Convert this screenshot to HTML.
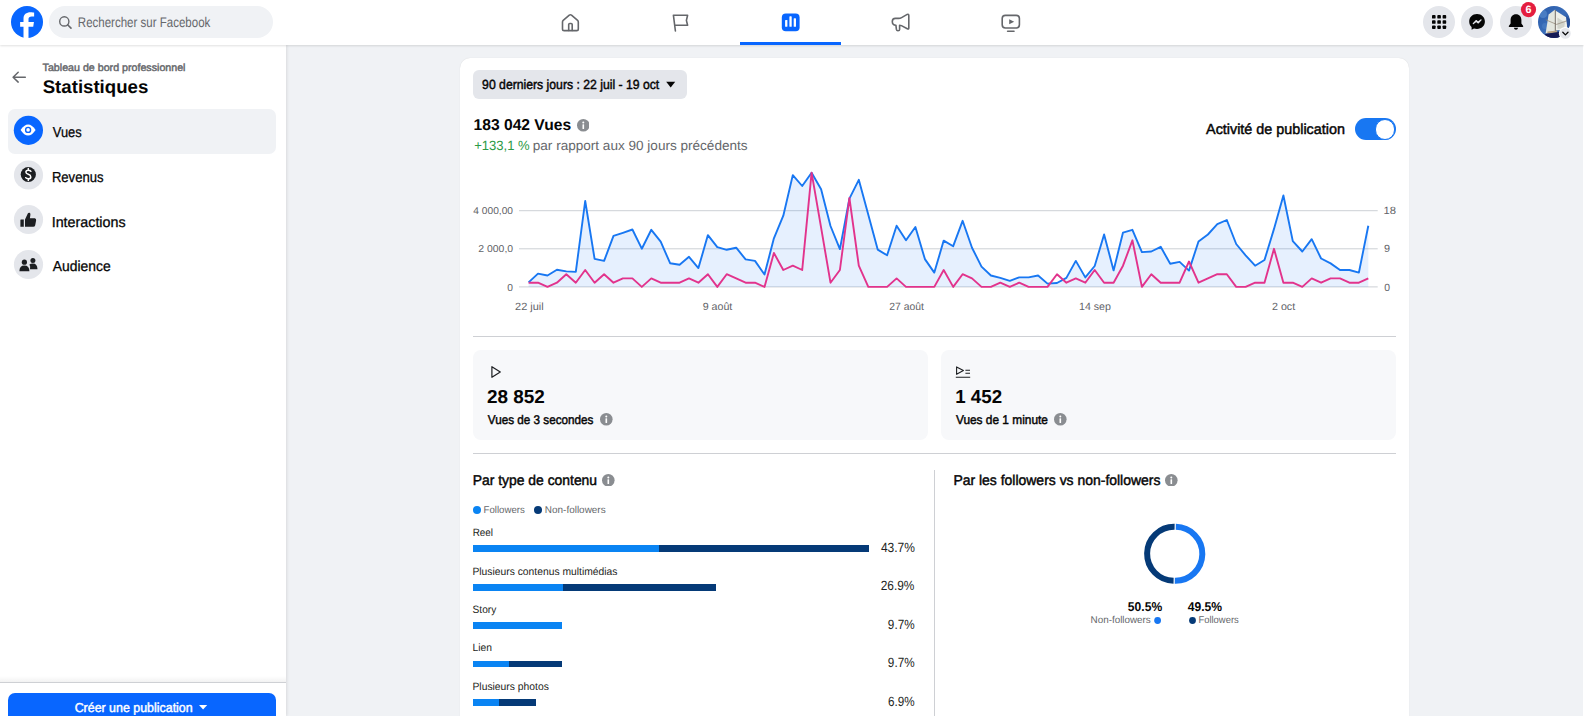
<!DOCTYPE html><html><head><meta charset="utf-8"><style>
body{margin:0;width:1584px;height:716px;background:#F0F2F5;position:relative;overflow:hidden;font-family:"Liberation Sans",sans-serif}
.abs{position:absolute}
.t{position:absolute;white-space:nowrap;transform-origin:0 0;z-index:5;text-rendering:geometricPrecision}
svg.abs{z-index:4}
</style></head><body>
<div class="abs" style="left:0;top:0;width:1584px;height:45px;background:#fff;box-shadow:0 1px 2px rgba(0,0,0,0.12);z-index:2"></div>
<div class="abs" style="left:0;top:45px;width:286px;height:671px;background:#fff;box-shadow:1px 0 3px rgba(0,0,0,0.10);z-index:1"></div>
<div class="abs" style="left:1583px;top:45px;width:1px;height:671px;background:#fff"></div>
<div class="abs" style="left:460px;top:58px;width:949px;height:700px;background:#fff;border-radius:10px;box-shadow:0 0 1px rgba(0,0,0,0.15)"></div>
<!-- FB logo -->
<svg class="abs" style="left:11px;top:6px" width="32" height="32" viewBox="0 0 1024 1024"><circle cx="512" cy="512" r="512" fill="#0866FF"/><path fill="#fff" d="M711.3,660 L734,512 H560 V415.96 C560,375.47,592,336,662,336 H740 V210 s-58.59-10-114.61-10 C490,200,400,270.88,400,399.2 V512 H292 V660 H400 V1024 H560 V660 Z"/></svg>
<!-- search -->
<div class="abs" style="left:49px;top:6px;width:224px;height:32px;border-radius:16px;background:#F0F2F5;z-index:3"></div>
<svg class="abs" style="left:0;top:0;z-index:4" width="300" height="45"><circle cx="64.3" cy="21.4" r="4.6" fill="none" stroke="#65676B" stroke-width="1.4"/><path d="M67.6 24.7 L71 28.1" stroke="#65676B" stroke-width="1.6" stroke-linecap="round"/></svg>
<!-- nav icons -->
<svg class="abs" style="left:540px;top:0;z-index:4" width="500" height="45" viewBox="540 0 500 45">
 <g fill="none" stroke="#65676B" stroke-width="1.6" stroke-linejoin="round" stroke-linecap="round">
  <path d="M563.2 20.3 L569.3 15.2 Q570.4 14.4 571.5 15.2 L577.6 20.3 Q578.3 20.9 578.3 21.9 V28.9 Q578.3 30.6 576.6 30.6 H564.2 Q562.5 30.6 562.5 28.9 V21.9 Q562.5 20.9 563.2 20.3 Z"/>
  <path d="M568.7 30.4 V24.6 Q568.7 23.5 569.8 23.5 H571.1 Q572.2 23.5 572.2 24.6 V30.4"/>
  <path d="M675.4 31 L673.4 15.2 H687.6 L686.4 20.4 L687.6 25.2 H674.8"/>
  <path d="M892.3 21.4 Q892.3 18.4 895.4 18.4 H898.6 Q900.2 18.4 901.6 17.6 L907.2 14.4 Q908.8 13.8 908.8 15.4 V27.9 Q908.8 29.6 907.3 28.8 L901.4 25.6 Q900.6 25.2 899.6 25.2 V29.4 Q899.6 30.7 898 30.7 Q896.6 30.7 896.4 29.4 L895.9 25.2 Q892.3 24.9 892.3 21.4 Z"/>
  <rect x="1002.2" y="15.4" width="17.2" height="12.6" rx="3.2"/>
  <path d="M1007.6 31.2 H1014"/>
 </g>
 <path d="M1009.2 19.2 L1014.2 21.7 L1009.2 24.2 Z" fill="#65676B"/>
 <rect x="781.8" y="13.6" width="17.8" height="17.7" rx="4" fill="#0866FF"/>
 <rect x="785.1" y="20" width="2.3" height="6.8" rx="0.6" fill="#fff"/>
 <rect x="789.4" y="16.3" width="2.3" height="10.5" rx="0.6" fill="#fff"/>
 <rect x="793.7" y="18.2" width="2.3" height="8.6" rx="0.6" fill="#fff"/>
 <rect x="740" y="42" width="101" height="3" fill="#0866FF"/>
</svg>
<!-- right buttons -->
<svg class="abs" style="left:1400px;top:0;z-index:4" width="184" height="45" viewBox="1400 0 184 45">
 <circle cx="1439" cy="22" r="16" fill="#E4E6EB"/>
 <g fill="#050505">
  <rect x="1432" y="15" width="3.6" height="3.6" rx="0.9"/><rect x="1437.3" y="15" width="3.6" height="3.6" rx="0.9"/><rect x="1442.6" y="15" width="3.6" height="3.6" rx="0.9"/>
  <rect x="1432" y="20.2" width="3.6" height="3.6" rx="0.9"/><rect x="1437.3" y="20.2" width="3.6" height="3.6" rx="0.9"/><rect x="1442.6" y="20.2" width="3.6" height="3.6" rx="0.9"/>
  <rect x="1432" y="25.4" width="3.6" height="3.6" rx="0.9"/><rect x="1437.3" y="25.4" width="3.6" height="3.6" rx="0.9"/><rect x="1442.6" y="25.4" width="3.6" height="3.6" rx="0.9"/>
 </g>
 <circle cx="1477" cy="22" r="16" fill="#E4E6EB"/>
 <path d="M1477 14 C1472.4 14 1469.2 17.3 1469.2 21.6 C1469.2 23.9 1470.1 25.8 1471.6 27.1 V29.7 L1474 28.4 C1474.9 28.7 1475.9 28.9 1477 28.9 C1481.6 28.9 1484.9 25.7 1484.9 21.5 C1484.9 17.3 1481.6 14 1477 14 Z" fill="#050505"/>
 <path d="M1473.3 23.6 L1476.1 20.6 L1478 22.2 L1481 19.9 L1478.3 22.9 L1476.3 21.3 Z" fill="#E4E6EB" stroke="#E4E6EB" stroke-width="1.3" stroke-linejoin="round"/>
 <circle cx="1516" cy="22" r="16" fill="#E4E6EB"/>
 <path d="M1516 14.2 C1512.6 14.2 1510.6 16.8 1510.6 20 V23.4 L1508.8 26.1 Q1508.4 26.9 1509.3 26.9 H1522.7 Q1523.6 26.9 1523.2 26.1 L1521.4 23.4 V20 C1521.4 16.8 1519.4 14.2 1516 14.2 Z" fill="#050505"/>
 <path d="M1513.8 27.8 Q1514.3 29.7 1516 29.7 Q1517.7 29.7 1518.2 27.8 Z" fill="#050505"/>
 <circle cx="1528.5" cy="9.6" r="7.6" fill="#E41E3F"/>
 <text x="1528.5" y="13.3" font-family="Liberation Sans" font-weight="bold" font-size="10.8" fill="#fff" text-anchor="middle" style="text-rendering:geometricPrecision">6</text>
 <defs>
  <clipPath id="av"><circle cx="1554" cy="22" r="16"/></clipPath>
  <linearGradient id="sky" x1="0" y1="0" x2="1" y2="1"><stop offset="0" stop-color="#2A5BA8"/><stop offset="0.5" stop-color="#3A6DB9"/><stop offset="1" stop-color="#1D4389"/></linearGradient>
 </defs>
 <g clip-path="url(#av)">
  <rect x="1538" y="6" width="32" height="32" fill="url(#sky)"/>
  <circle cx="1543" cy="14" r="4" fill="#5B8FD0" opacity="0.6"/>
  <circle cx="1545" cy="26" r="3" fill="#4F83C8" opacity="0.5"/>
  <path d="M1548.6 14.5 L1555.2 9.6 L1555.4 31 L1545.6 33.4 Z" fill="#E3E6DF"/>
  <path d="M1555.4 10.6 L1566.5 17.5 L1567.6 29.4 L1555.4 30.6 Z" fill="#EEEFE9"/>
  <path d="M1557.4 17.4 L1565 22.4 L1564 28.6 L1557.4 28.8 Z" fill="#D2D4CC"/>
  <path d="M1545.8 19.8 L1556.6 24.4 L1567 20.8" fill="none" stroke="#8E8272" stroke-width="0.7"/>
  <path d="M1555.3 10 V31.5" stroke="#776B5C" stroke-width="0.9"/>
  <path d="M1566 16 L1570 19 L1570 30 L1567.5 29.5 Z" fill="#27509A"/>
  <path d="M1547.5 31.6 L1557 30.6 L1557.4 32.6 L1547.2 33.6 Z" fill="#B8A080"/>
  <path d="M1545 34 L1562 31.6 L1560.5 38.5 L1546 38.5 Z" fill="#151A55"/>
 </g>
 <circle cx="1565.3" cy="33.4" r="6.4" fill="#fff"/>
 <circle cx="1565.3" cy="33.4" r="5.4" fill="#E4E6EB"/>
 <path d="M1562.8 32.3 L1565.4 34.9 L1568 32.3" fill="none" stroke="#050505" stroke-width="1.3" stroke-linecap="round" stroke-linejoin="round"/>
</svg>
<!-- sidebar -->
<svg class="abs" style="left:0;top:45px;z-index:4" width="286" height="260" viewBox="0 45 286 260">
 <path d="M25.3 77.2 H13.2 M18.2 72.3 L13.1 77.2 L18.2 82.1" fill="none" stroke="#65676B" stroke-width="1.5" stroke-linecap="round" stroke-linejoin="round"/>
</svg>
<div class="abs" style="left:8px;top:109px;width:268px;height:45px;border-radius:7px;background:#F0F2F5;z-index:2"></div>
<svg class="abs" style="left:0;top:100px;z-index:4" width="60" height="200" viewBox="0 100 60 200">
 <circle cx="28.4" cy="130.3" r="14.6" fill="#0866FF"/>
 <path d="M20.6 129.9 Q24.2 124.4 28.1 124.4 Q32 124.4 35.6 129.9 Q32 135.4 28.1 135.4 Q24.2 135.4 20.6 129.9 Z" fill="#fff"/>
 <circle cx="28.1" cy="129.9" r="2.5" fill="none" stroke="#0866FF" stroke-width="1.4"/>
 <circle cx="28.5" cy="175" r="14.6" fill="#E4E6EB"/>
 <circle cx="28.3" cy="174.5" r="7.6" fill="#1C1E21"/>
 <path d="M30.9 171.3 Q30.2 170.2 28.3 170.2 Q25.9 170.2 25.9 172 Q25.9 173.5 28.3 174.3 Q30.8 175.1 30.8 176.9 Q30.8 178.8 28.3 178.8 Q26.4 178.8 25.7 177.7 M28.3 168.6 V170.2 M28.3 178.8 V180.4" fill="none" stroke="#fff" stroke-width="1.5" stroke-linecap="round"/>
 <circle cx="28.5" cy="219.5" r="14.6" fill="#E4E6EB"/>
 <path d="M20.8 219.6 H23.8 V226.8 H20.8 Q20.4 226.8 20.4 226.4 V220 Q20.4 219.6 20.8 219.6 Z" fill="#1C1E21"/>
 <path d="M25 219.4 L27.8 213.6 Q28.4 212.4 29.6 212.8 Q30.6 213.2 30.4 214.7 L29.9 218.2 H34.8 Q36.5 218.4 36.1 220.4 L35.2 225.3 Q34.8 226.8 33.2 226.8 H25 Z" fill="#1C1E21"/>
 <circle cx="28.5" cy="264.5" r="14.6" fill="#E4E6EB"/>
 <circle cx="24.4" cy="262.2" r="2.6" fill="#1C1E21"/>
 <circle cx="32.9" cy="260.4" r="2.5" fill="#1C1E21"/>
 <path d="M19.4 271.2 Q19.4 265.6 24.4 265.6 Q29.4 265.6 29.4 271.2 Z" fill="#1C1E21"/>
 <path d="M30 269.3 Q30.6 266 29.4 264.6 Q30.6 263.5 32.9 263.5 Q37.3 263.5 37.5 269.3 Z" fill="#1C1E21"/>
</svg>
<!-- bottom create button -->
<div class="abs" style="left:0;top:676px;width:286px;height:6px;background:linear-gradient(to bottom,rgba(0,0,0,0),rgba(0,0,0,0.05));z-index:3"></div>
<div class="abs" style="left:0;top:682px;width:286px;height:1px;background:#CED0D4;z-index:3"></div>
<div class="abs" style="left:8px;top:693px;width:268px;height:36px;border-radius:7px;background:#0866FF;z-index:3"></div>
<svg class="abs" style="left:195px;top:700px;z-index:4" width="16" height="12" viewBox="195 700 16 12"><path d="M199 705 H207.2 L203.1 709.4 Z" fill="#fff"/></svg>
<!-- date button -->
<div class="abs" style="left:473px;top:70px;width:214px;height:29px;border-radius:6px;background:#E4E6EB;z-index:3"></div>
<svg class="abs" style="left:660px;top:75px;z-index:4" width="20" height="20" viewBox="660 75 20 20"><path d="M666.2 81.8 H675.2 L670.7 87.4 Z" fill="#050505"/></svg>
<!-- toggle -->
<div class="abs" style="left:1355px;top:118px;width:41px;height:22px;border-radius:11px;background:#1877F2;z-index:3"></div>
<div class="abs" style="left:1374.6px;top:119px;width:18.6px;height:18.6px;border-radius:50%;background:#fff;border:1.2px solid #1877F2;z-index:3"></div>
<!-- separators -->
<div class="abs" style="left:473px;top:336px;width:923px;height:1px;background:#CED0D4;z-index:3"></div>
<div class="abs" style="left:473px;top:453px;width:923px;height:1px;background:#CED0D4;z-index:3"></div>
<div class="abs" style="left:934px;top:470px;width:1px;height:246px;background:#CED0D4;z-index:3"></div>
<!-- stat cards -->
<div class="abs" style="left:473px;top:350px;width:455px;height:90px;border-radius:8px;background:#F7F8FA;z-index:3"></div>
<div class="abs" style="left:941px;top:350px;width:455px;height:90px;border-radius:8px;background:#F7F8FA;z-index:3"></div>
<svg class="abs" style="left:480px;top:360px;z-index:4" width="500" height="30" viewBox="480 360 500 30">
 <path d="M491.9 366.7 L500.3 372 L491.9 377.3 Z" fill="none" stroke="#1C1E21" stroke-width="1.2" stroke-linejoin="round"/>
 <path d="M956.6 366.9 L963.4 370.6 L956.6 374.3 Z" fill="none" stroke="#1C1E21" stroke-width="1.1" stroke-linejoin="round"/>
 <path d="M965.4 370.2 H970 M965.4 373.2 H970 M955.8 377.3 H970.2" stroke="#1C1E21" stroke-width="1.1"/>
</svg>
<!-- bars -->
<div class="abs" style="left:473px;top:545px;width:186px;height:7px;background:#0A84F3;z-index:3"></div>
<div class="abs" style="left:659px;top:545px;width:210px;height:7px;background:#053A77;z-index:3"></div>
<div class="abs" style="left:473px;top:584px;width:90px;height:6.5px;background:#0A84F3;z-index:3"></div>
<div class="abs" style="left:563px;top:584px;width:153px;height:6.5px;background:#053A77;z-index:3"></div>
<div class="abs" style="left:473px;top:622.3px;width:89px;height:6.5px;background:#0A84F3;z-index:3"></div>
<div class="abs" style="left:473px;top:660.9px;width:36px;height:6.5px;background:#0A84F3;z-index:3"></div>
<div class="abs" style="left:509px;top:660.9px;width:53px;height:6.5px;background:#053A77;z-index:3"></div>
<div class="abs" style="left:473px;top:699px;width:26px;height:6.5px;background:#0A84F3;z-index:3"></div>
<div class="abs" style="left:499px;top:699px;width:37px;height:6.5px;background:#053A77;z-index:3"></div>
<!-- legend dots -->
<svg class="abs" style="left:460px;top:500px;z-index:4" width="100" height="20" viewBox="460 500 100 20">
 <circle cx="477" cy="509.9" r="4" fill="#0A84F3"/><circle cx="538" cy="509.9" r="4" fill="#053A77"/>
</svg>
<!-- donut -->
<svg class="abs" style="left:1080px;top:510px;z-index:4" width="180" height="120" viewBox="1080 510 180 120">
 <path d="M1175.8 526.8 A27 27 0 1 1 1174.8 580.8" fill="none" stroke="#1877F2" stroke-width="6"/>
 <path d="M1173.6 580.8 A27 27 0 0 1 1174.6 526.8" fill="none" stroke="#053A77" stroke-width="6"/>
 <circle cx="1157.6" cy="620.5" r="3.4" fill="#1877F2"/><circle cx="1192.5" cy="620.5" r="3.4" fill="#053A77"/>
</svg>

<svg class="abs" style="left:0;top:0" width="1584" height="716" viewBox="0 0 1584 716">
<rect x="519" y="210.2" width="858.7" height="1" fill="#CCD0D5"/><rect x="519" y="248.3" width="858.7" height="1" fill="#CCD0D5"/><rect x="519" y="286.4" width="858.7" height="1" fill="#CCD0D5"/>
<path d="M528.6,286.9 L528.6,282.4 538.0,273.6 547.5,275.5 556.9,269.7 566.3,271.4 575.8,271.9 585.2,201.0 594.6,258.9 604.1,260.9 613.5,235.9 622.9,232.8 632.4,229.5 641.8,248.7 651.3,229.8 660.7,241.7 670.1,263.2 679.6,264.7 689.0,256.8 698.4,268.1 707.9,235.1 717.3,247.2 726.7,249.8 736.2,247.7 745.6,259.4 755.0,260.9 764.5,274.5 773.9,238.3 783.3,215.7 792.8,175.1 802.2,186.0 811.6,172.8 821.1,189.2 830.5,226.0 839.9,249.1 849.4,198.7 858.8,179.8 868.3,214.7 877.7,249.6 887.1,255.3 896.6,225.7 906.0,240.2 915.4,227.0 924.9,259.1 934.3,272.6 943.7,240.6 953.2,246.2 962.6,220.8 972.0,247.7 981.5,266.6 990.9,275.5 1000.3,277.9 1009.8,280.8 1019.2,277.4 1028.6,277.4 1038.1,275.5 1047.5,283.6 1057.0,283.0 1066.4,277.9 1075.8,260.9 1085.3,277.4 1094.7,266.0 1104.1,234.5 1113.6,270.4 1123.0,232.6 1132.4,229.8 1141.9,252.1 1151.3,251.5 1160.7,246.8 1170.2,263.8 1179.6,261.9 1189.0,270.6 1198.5,241.5 1207.9,234.5 1217.3,224.2 1226.8,220.0 1236.2,244.0 1245.6,255.3 1255.1,265.7 1264.5,260.0 1274.0,228.9 1283.4,195.5 1292.8,241.1 1302.3,251.5 1311.7,239.2 1321.1,258.5 1330.6,263.4 1340.0,270.0 1349.4,270.0 1358.9,272.6 1368.3,225.7 L1368.3,286.9 Z" fill="#1877F2" fill-opacity="0.11"/>
<polyline points="528.6,282.4 538.0,273.6 547.5,275.5 556.9,269.7 566.3,271.4 575.8,271.9 585.2,201.0 594.6,258.9 604.1,260.9 613.5,235.9 622.9,232.8 632.4,229.5 641.8,248.7 651.3,229.8 660.7,241.7 670.1,263.2 679.6,264.7 689.0,256.8 698.4,268.1 707.9,235.1 717.3,247.2 726.7,249.8 736.2,247.7 745.6,259.4 755.0,260.9 764.5,274.5 773.9,238.3 783.3,215.7 792.8,175.1 802.2,186.0 811.6,172.8 821.1,189.2 830.5,226.0 839.9,249.1 849.4,198.7 858.8,179.8 868.3,214.7 877.7,249.6 887.1,255.3 896.6,225.7 906.0,240.2 915.4,227.0 924.9,259.1 934.3,272.6 943.7,240.6 953.2,246.2 962.6,220.8 972.0,247.7 981.5,266.6 990.9,275.5 1000.3,277.9 1009.8,280.8 1019.2,277.4 1028.6,277.4 1038.1,275.5 1047.5,283.6 1057.0,283.0 1066.4,277.9 1075.8,260.9 1085.3,277.4 1094.7,266.0 1104.1,234.5 1113.6,270.4 1123.0,232.6 1132.4,229.8 1141.9,252.1 1151.3,251.5 1160.7,246.8 1170.2,263.8 1179.6,261.9 1189.0,270.6 1198.5,241.5 1207.9,234.5 1217.3,224.2 1226.8,220.0 1236.2,244.0 1245.6,255.3 1255.1,265.7 1264.5,260.0 1274.0,228.9 1283.4,195.5 1292.8,241.1 1302.3,251.5 1311.7,239.2 1321.1,258.5 1330.6,263.4 1340.0,270.0 1349.4,270.0 1358.9,272.6 1368.3,225.7" fill="none" stroke="#1877F2" stroke-width="1.9" stroke-linejoin="round"/>
<polyline points="528.6,282.7 538.0,282.7 547.5,286.9 556.9,282.7 566.3,274.2 575.8,282.7 585.2,270.0 594.6,282.7 604.1,274.2 613.5,282.7 622.9,278.4 632.4,278.4 641.8,286.9 651.3,278.4 660.7,282.7 670.1,282.7 679.6,282.7 689.0,278.4 698.4,282.7 707.9,274.2 717.3,286.9 726.7,274.2 736.2,278.4 745.6,282.7 755.0,282.7 764.5,286.9 773.9,253.0 783.3,270.0 792.8,265.7 802.2,270.0 811.6,172.6 821.1,227.6 830.5,282.7 839.9,270.0 849.4,198.0 858.8,265.7 868.3,286.9 877.7,286.9 887.1,286.9 896.6,278.4 906.0,286.9 915.4,286.9 924.9,286.9 934.3,286.9 943.7,270.0 953.2,286.9 962.6,274.2 972.0,278.4 981.5,286.9 990.9,286.9 1000.3,282.7 1009.8,286.9 1019.2,282.7 1028.6,286.9 1038.1,286.9 1047.5,286.9 1057.0,274.2 1066.4,282.7 1075.8,278.4 1085.3,282.7 1094.7,270.0 1104.1,282.7 1113.6,282.7 1123.0,265.7 1132.4,240.3 1141.9,286.9 1151.3,274.2 1160.7,282.7 1170.2,282.7 1179.6,282.7 1189.0,261.5 1198.5,282.7 1207.9,278.4 1217.3,274.2 1226.8,274.2 1236.2,286.9 1245.6,286.9 1255.1,282.7 1264.5,282.7 1274.0,248.8 1283.4,282.7 1292.8,282.7 1302.3,286.9 1311.7,278.4 1321.1,282.7 1330.6,278.4 1340.0,278.4 1349.4,282.7 1358.9,282.7 1368.3,278.4" fill="none" stroke="#E2338C" stroke-width="1.9" stroke-linejoin="round"/>
</svg>
<svg class="abs" style="left:576.70px;top:119.10px" width="12.6" height="12.6" viewBox="-10 -10 20 20"><circle r="10" fill="#8A8D91"/><circle cx="0" cy="-4.6" r="1.6" fill="#fff"/><rect x="-1.3" y="-1.6" width="2.6" height="7.4" rx="0.8" fill="#fff"/></svg><svg class="abs" style="left:600.00px;top:413.10px" width="12.6" height="12.6" viewBox="-10 -10 20 20"><circle r="10" fill="#8A8D91"/><circle cx="0" cy="-4.6" r="1.6" fill="#fff"/><rect x="-1.3" y="-1.6" width="2.6" height="7.4" rx="0.8" fill="#fff"/></svg><svg class="abs" style="left:1054.20px;top:413.30px" width="12.6" height="12.6" viewBox="-10 -10 20 20"><circle r="10" fill="#8A8D91"/><circle cx="0" cy="-4.6" r="1.6" fill="#fff"/><rect x="-1.3" y="-1.6" width="2.6" height="7.4" rx="0.8" fill="#fff"/></svg><svg class="abs" style="left:602.20px;top:473.70px" width="12.6" height="12.6" viewBox="-10 -10 20 20"><circle r="10" fill="#8A8D91"/><circle cx="0" cy="-4.6" r="1.6" fill="#fff"/><rect x="-1.3" y="-1.6" width="2.6" height="7.4" rx="0.8" fill="#fff"/></svg><svg class="abs" style="left:1165.00px;top:473.70px" width="12.6" height="12.6" viewBox="-10 -10 20 20"><circle r="10" fill="#8A8D91"/><circle cx="0" cy="-4.6" r="1.6" fill="#fff"/><rect x="-1.3" y="-1.6" width="2.6" height="7.4" rx="0.8" fill="#fff"/></svg>
<div id="t_search" class="t" style="left:77px;top:15px;font-size:14.0px;line-height:14.0px;color:#65676B;transform:scaleX(0.8226)"><span style="padding-left:1.010px">Rechercher sur Facebook</span></div>
<div id="t_tdb" class="t" style="left:42px;top:63px;font-size:10.5px;line-height:10.5px;-webkit-text-stroke:0.45px currentColor;color:#65676B;transform:scaleX(1.0160)"><span style="padding-left:0.562px">Tableau de bord professionnel</span></div>
<div id="t_stat" class="t" style="left:42px;top:78px;font-size:18.3px;line-height:18.3px;font-weight:bold;color:#050505;transform:scaleX(1.0187)"><span style="padding-left:0.700px">Statistiques</span></div>
<div id="t_vues" class="t" style="left:52px;top:126px;font-size:14.4px;line-height:14.4px;-webkit-text-stroke:0.28px currentColor;color:#050505;transform:scaleX(0.8936)"><span style="padding-left:0.896px">Vues</span></div>
<div id="t_rev" class="t" style="left:51px;top:171px;font-size:14.5px;line-height:14.5px;-webkit-text-stroke:0.28px currentColor;color:#050505;transform:scaleX(0.9019)"><span style="padding-left:0.996px">Revenus</span></div>
<div id="t_inter" class="t" style="left:51px;top:216px;font-size:14.5px;line-height:14.5px;-webkit-text-stroke:0.28px currentColor;color:#050505;transform:scaleX(0.9863)"><span style="padding-left:0.698px">Interactions</span></div>
<div id="t_aud" class="t" style="left:52px;top:260px;font-size:14.5px;line-height:14.5px;-webkit-text-stroke:0.28px currentColor;color:#050505;transform:scaleX(0.9577)"><span style="padding-left:0.829px">Audience</span></div>
<div id="t_creer" class="t" style="left:74px;top:701px;font-size:13.0px;line-height:13.0px;-webkit-text-stroke:0.45px currentColor;color:#FFFFFF;transform:scaleX(0.9551)"><span style="padding-left:0.662px">Créer une publication</span></div>
<div id="t_date" class="t" style="left:482px;top:78px;font-size:13.3px;line-height:13.3px;-webkit-text-stroke:0.45px currentColor;color:#050505;transform:scaleX(0.9183)"><span style="padding-left:0.130px">90 derniers jours : 22 juil - 19 oct</span></div>
<div id="t_total" class="t" style="left:473px;top:118px;font-size:15.8px;line-height:15.8px;font-weight:bold;color:#050505;transform:scaleX(0.9891)"><span style="padding-left:0.541px">183 042 Vues</span></div>
<div id="t_pct" class="t" style="left:474px;top:139px;font-size:13.4px;line-height:13.4px;color:#2B9A46;transform:scaleX(0.9748)"><span style="padding-left:0.215px">+133,1 %</span></div>
<div id="t_parrap" class="t" style="left:532px;top:139px;font-size:13.4px;line-height:13.4px;color:#65676B;transform:scaleX(1.0124)"><span style="padding-left:0.793px">par rapport aux 90 jours précédents</span></div>
<div id="t_activ" class="t" style="left:1206px;top:123px;font-size:14.5px;line-height:14.5px;-webkit-text-stroke:0.45px currentColor;color:#050505;transform:scaleX(0.9901)"><span style="padding-left:0.074px">Activité de publication</span></div>
<div id="t_y1" class="t" style="left:473px;top:207px;font-size:10.0px;line-height:10.0px;color:#5F6368;transform:scaleX(1.0187)"><span style="padding-left:0.362px">4 000,00</span></div>
<div id="t_y2" class="t" style="left:478px;top:245px;font-size:10.0px;line-height:10.0px;color:#5F6368;transform:scaleX(1.0415)"><span style="padding-left:0.324px">2 000,0</span></div>
<div id="t_y3" class="t" style="left:507px;top:284px;font-size:10.1px;line-height:10.1px;color:#5F6368;transform:scaleX(1.0128)"><span style="padding-left:0.232px">0</span></div>
<div id="t_r1" class="t" style="left:1383px;top:206px;font-size:10.5px;line-height:10.5px;color:#5F6368;transform:scaleX(1.0682)"><span style="padding-left:0.504px">18</span></div>
<div id="t_r2" class="t" style="left:1383px;top:244px;font-size:10.5px;line-height:10.5px;color:#5F6368;transform:scaleX(1.0290)"><span style="padding-left:0.952px">9</span></div>
<div id="t_r3" class="t" style="left:1384px;top:283px;font-size:10.5px;line-height:10.5px;color:#5F6368;transform:scaleX(0.9879)"><span style="padding-left:0.368px">0</span></div>
<div id="t_x1" class="t" style="left:515px;top:302px;font-size:10.5px;line-height:10.5px;color:#5F6368;transform:scaleX(1.0429)"><span style="padding-left:0.097px">22 juil</span></div>
<div id="t_x2" class="t" style="left:702px;top:302px;font-size:10.5px;line-height:10.5px;color:#5F6368;transform:scaleX(1.0152)"><span style="padding-left:0.688px">9 août</span></div>
<div id="t_x3" class="t" style="left:889px;top:302px;font-size:10.5px;line-height:10.5px;color:#5F6368;transform:scaleX(0.9869)"><span style="padding-left:0.271px">27 août</span></div>
<div id="t_x4" class="t" style="left:1078px;top:302px;font-size:10.5px;line-height:10.5px;color:#5F6368;transform:scaleX(1.0148)"><span style="padding-left:0.974px">14 sep</span></div>
<div id="t_x5" class="t" style="left:1271px;top:302px;font-size:10.5px;line-height:10.5px;color:#5F6368;transform:scaleX(1.0186)"><span style="padding-left:0.955px">2 oct</span></div>
<div id="t_n1" class="t" style="left:487px;top:388px;font-size:18.8px;line-height:18.8px;font-weight:bold;color:#050505;transform:scaleX(1.0066)"><span style="padding-left:0.062px">28 852</span></div>
<div id="t_l1" class="t" style="left:487px;top:414px;font-size:12.6px;line-height:12.6px;-webkit-text-stroke:0.45px currentColor;color:#050505;transform:scaleX(0.9292)"><span style="padding-left:0.847px">Vues de 3 secondes</span></div>
<div id="t_n2" class="t" style="left:955px;top:388px;font-size:18.8px;line-height:18.8px;font-weight:bold;color:#050505;transform:scaleX(0.9948)"><span style="padding-left:0.271px">1 452</span></div>
<div id="t_l2" class="t" style="left:955px;top:414px;font-size:12.6px;line-height:12.6px;-webkit-text-stroke:0.45px currentColor;color:#050505;transform:scaleX(0.9433)"><span style="padding-left:0.974px">Vues de 1 minute</span></div>
<div id="t_h1" class="t" style="left:472px;top:474px;font-size:14.3px;line-height:14.3px;-webkit-text-stroke:0.45px currentColor;color:#050505;transform:scaleX(0.9714)"><span style="padding-left:0.792px">Par type de contenu</span></div>
<div id="t_h2" class="t" style="left:953px;top:474px;font-size:14.3px;line-height:14.3px;-webkit-text-stroke:0.45px currentColor;color:#050505;transform:scaleX(0.9759)"><span style="padding-left:0.420px">Par les followers vs non-followers</span></div>
<div id="t_lg1" class="t" style="left:483px;top:506px;font-size:10.0px;line-height:10.0px;color:#65676B;transform:scaleX(0.9618)"><span style="padding-left:0.627px">Followers</span></div>
<div id="t_lg2" class="t" style="left:544px;top:506px;font-size:10.0px;line-height:10.0px;color:#65676B;transform:scaleX(0.9944)"><span style="padding-left:0.865px">Non-followers</span></div>
<div id="t_b1" class="t" style="left:472px;top:528px;font-size:10.6px;line-height:10.6px;color:#1C1E21;transform:scaleX(0.9348)"><span style="padding-left:0.677px">Reel</span></div>
<div id="t_b2" class="t" style="left:472px;top:567px;font-size:10.6px;line-height:10.6px;color:#1C1E21;transform:scaleX(0.9731)"><span style="padding-left:0.473px">Plusieurs contenus multimédias</span></div>
<div id="t_b3" class="t" style="left:472px;top:605px;font-size:10.6px;line-height:10.6px;color:#1C1E21;transform:scaleX(0.9561)"><span style="padding-left:0.606px">Story</span></div>
<div id="t_b4" class="t" style="left:472px;top:643px;font-size:10.6px;line-height:10.6px;color:#1C1E21;transform:scaleX(0.9710)"><span style="padding-left:0.496px">Lien</span></div>
<div id="t_b5" class="t" style="left:472px;top:682px;font-size:10.6px;line-height:10.6px;color:#1C1E21;transform:scaleX(0.9746)"><span style="padding-left:0.476px">Plusieurs photos</span></div>
<div id="t_p1" class="t" style="left:880px;top:541px;font-size:13.4px;line-height:13.4px;color:#1C1E21;transform:scaleX(0.8971)"><span style="padding-left:0.985px">43.7%</span></div>
<div id="t_p2" class="t" style="left:880px;top:579px;font-size:13.4px;line-height:13.4px;color:#1C1E21;transform:scaleX(0.8877)"><span style="padding-left:0.770px">26.9%</span></div>
<div id="t_p3" class="t" style="left:887px;top:618px;font-size:13.4px;line-height:13.4px;color:#1C1E21;transform:scaleX(0.8759)"><span style="padding-left:0.986px">9.7%</span></div>
<div id="t_p4" class="t" style="left:887px;top:656px;font-size:13.4px;line-height:13.4px;color:#1C1E21;transform:scaleX(0.8759)"><span style="padding-left:0.986px">9.7%</span></div>
<div id="t_p5" class="t" style="left:887px;top:695px;font-size:13.4px;line-height:13.4px;color:#1C1E21;transform:scaleX(0.8735)"><span style="padding-left:1.049px">6.9%</span></div>
<div id="t_d1" class="t" style="left:1127px;top:601px;font-size:12.8px;line-height:12.8px;font-weight:bold;color:#050505;transform:scaleX(0.9440)"><span style="padding-left:0.931px">50.5%</span></div>
<div id="t_d2" class="t" style="left:1187px;top:601px;font-size:12.8px;line-height:12.8px;font-weight:bold;color:#050505;transform:scaleX(0.9460)"><span style="padding-left:0.749px">49.5%</span></div>
<div id="t_dl1" class="t" style="left:1090px;top:616px;font-size:10.0px;line-height:10.0px;color:#65676B;transform:scaleX(0.9849)"><span style="padding-left:0.585px">Non-followers</span></div>
<div id="t_dl2" class="t" style="left:1198px;top:616px;font-size:10.0px;line-height:10.0px;color:#65676B;transform:scaleX(0.9409)"><span style="padding-left:0.492px">Followers</span></div>
</body></html>
